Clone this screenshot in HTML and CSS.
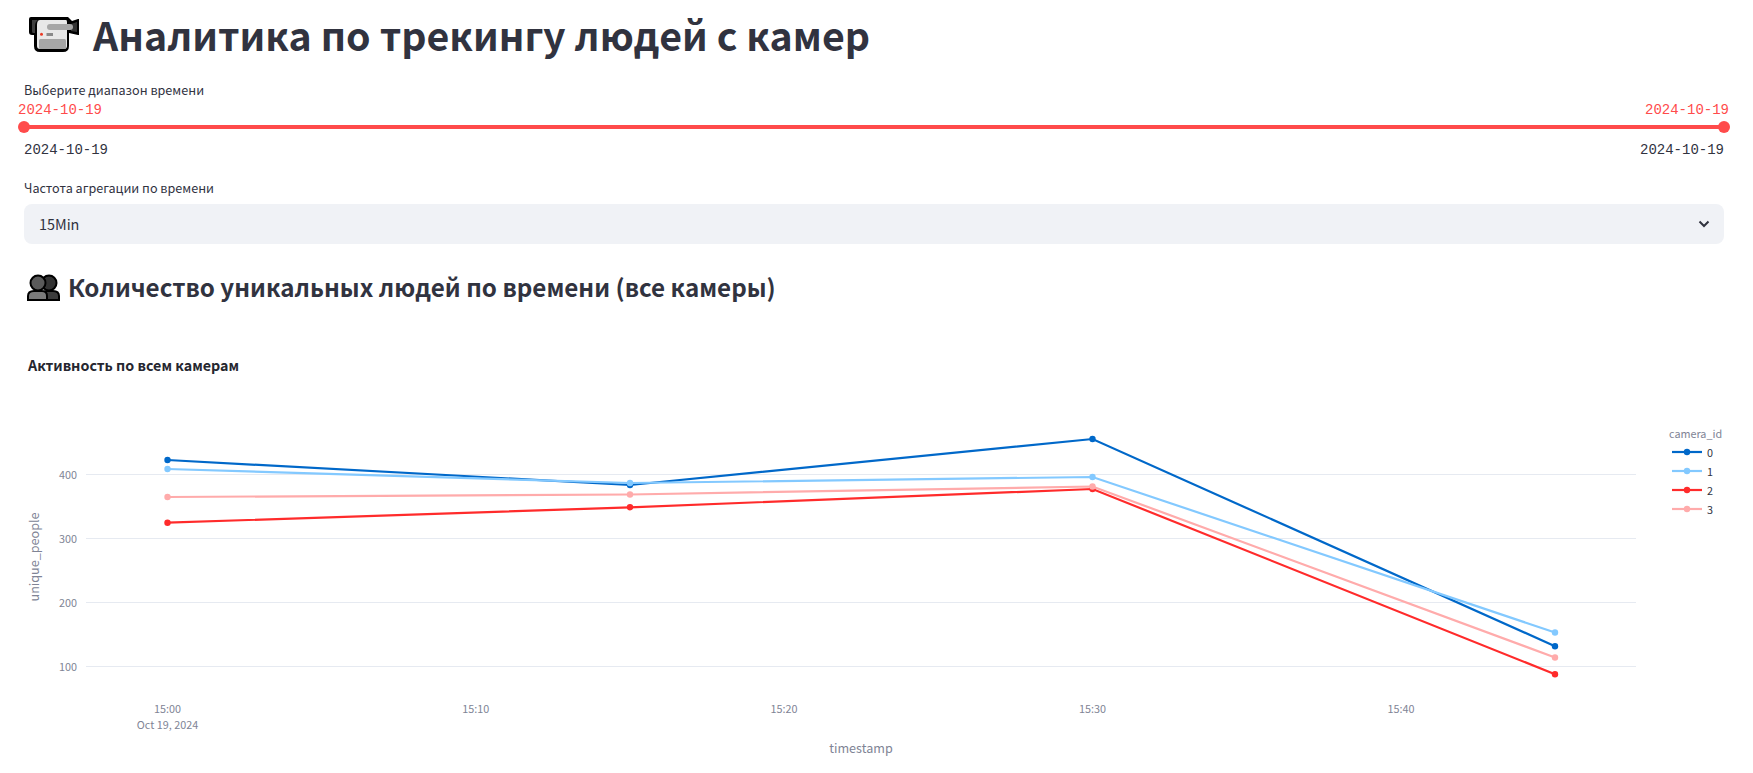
FILE: index.html
```html
<!doctype html>
<html lang="ru">
    <head>
        <meta charset="utf-8">
        <title>Аналитика по трекингу людей с камер</title>
        <link rel="stylesheet" href="styles.css">
    </head>
    <body>
        <main class="page">
            <header class="title-row">
                <svg class="cam-icon" viewBox="28 16 52 37" width="52" height="37">
                    <path d="M29 19Q29 17 31 17H68L72 21L78 19H79V35H78L69 33V46Q69 52 63 52H40Q34 52 34 46V35H32Q29 35 29 32Z" fill="#000"/>
                    <path d="M40 20H66Q67 20 67 22V46Q67 49 64 49H40Q37 49 37 46V25Q37 20 40 20Z" fill="#e8e8e8"/>
                    <path d="M32 20H38Q35 22 35 26V33H33Q32 33 32 31Z" fill="#3d3d3d"/>
                    <path d="M71 24L77 22V32L71 31Z" fill="#333"/>
                    <rect x="47" y="24" width="26" height="6" rx="3" fill="#a6a6a6"/>
                    <circle cx="41.5" cy="34.3" r="1.5" fill="#ea3a24"/>
                    <rect x="46.5" y="33" width="6.5" height="3" fill="#8a8a8a"/>
                    <rect x="39" y="39" width="27" height="10" rx="1.5" fill="#a6a6a6"/>
                </svg>
                <h1>Аналитика по трекингу людей с камер</h1>
            </header>

            <label class="field-label label-slider">Выберите диапазон времени</label>
            <div class="slider">
                <div class="slider-values">
                    <span>2024-10-19</span>
                    <span>2024-10-19</span>
                </div>
                <div class="slider-track">
                    <span class="thumb"></span>
                    <span class="thumb"></span>
                </div>
                <div class="slider-limits">
                    <span>2024-10-19</span>
                    <span>2024-10-19</span>
                </div>
            </div>

            <label class="field-label label-select">Частота агрегации по времени</label>
            <div class="select">
                <span class="select-value">15Min</span>
                <svg class="chevron" viewBox="0 0 12 8" width="12" height="8">
                    <path d="M1.5 1.5L6 6L10.5 1.5" fill="none" stroke="#31333f" stroke-width="2"/>
                </svg>
            </div>

            <div class="subtitle-row">
                <svg class="people-icon" viewBox="0 0 33 28" width="33" height="28">
                    <circle cx="22" cy="9" r="7.5" fill="#333" stroke="#000" stroke-width="2"/>
                    <path d="M14 26V22Q14 17 20 17H26Q32 17 32 22V26Z" fill="#3c3c3c" stroke="#000" stroke-width="2"/>
                    <circle cx="11" cy="9" r="7.5" fill="#5a5a5a" stroke="#000" stroke-width="2"/>
                    <path d="M1 26V22Q1 17 7 17H15Q20 17 20 22V26Z" fill="#7a7a7a" stroke="#000" stroke-width="2"/>
                </svg>
                <h2>Количество уникальных людей по времени (все камеры)</h2>
            </div>

            <!-- viewBox uses page coordinates so points are easy to check against the screen -->
            <svg class="chart" viewBox="24 340 1705 433" width="1705" height="433">
                <text class="chart-title" x="28" y="371">Активность по всем камерам</text>

                <g class="grid">
                    <line x1="86" x2="1636" y1="474.5" y2="474.5"/>
                    <line x1="86" x2="1636" y1="538.5" y2="538.5"/>
                    <line x1="86" x2="1636" y1="602.5" y2="602.5"/>
                    <line x1="86" x2="1636" y1="666.5" y2="666.5"/>
                </g>

                <g class="tick tick-y">
                    <text x="77" y="479">400</text>
                    <text x="77" y="543">300</text>
                    <text x="77" y="607">200</text>
                    <text x="77" y="671">100</text>
                </g>
                <g class="tick tick-x">
                    <text x="167.5" y="713">15:00</text>
                    <text x="167.5" y="729">Oct 19, 2024</text>
                    <text x="475.7" y="713">15:10</text>
                    <text x="784.1" y="713">15:20</text>
                    <text x="1092.5" y="713">15:30</text>
                    <text x="1400.9" y="713">15:40</text>
                </g>
                <text class="axis-title" x="861" y="753" text-anchor="middle">timestamp</text>
                <text class="axis-title" transform="translate(39 557) rotate(-90)" text-anchor="middle">unique_people</text>

                <g class="series s0">
                    <polyline points="167.5,460 630,485 1092.5,439 1555,646.2"/>
                    <circle cx="167.5" cy="460" r="3.2"/><circle cx="630" cy="485" r="3.2"/><circle cx="1092.5" cy="439" r="3.2"/><circle cx="1555" cy="646.2" r="3.2"/>
                </g>
                <g class="series s1">
                    <polyline points="167.5,469 630,483 1092.5,477 1555,632.5"/>
                    <circle cx="167.5" cy="469" r="3.2"/><circle cx="630" cy="483" r="3.2"/><circle cx="1092.5" cy="477" r="3.2"/><circle cx="1555" cy="632.5" r="3.2"/>
                </g>
                <g class="series s2">
                    <polyline points="167.5,522.7 630,507.3 1092.5,489 1555,674.2"/>
                    <circle cx="167.5" cy="522.7" r="3.2"/><circle cx="630" cy="507.3" r="3.2"/><circle cx="1092.5" cy="489" r="3.2"/><circle cx="1555" cy="674.2" r="3.2"/>
                </g>
                <g class="series s3">
                    <polyline points="167.5,497 630,494.5 1092.5,486.5 1555,657.5"/>
                    <circle cx="167.5" cy="497" r="3.2"/><circle cx="630" cy="494.5" r="3.2"/><circle cx="1092.5" cy="486.5" r="3.2"/><circle cx="1555" cy="657.5" r="3.2"/>
                </g>

                <text class="legend-title" x="1669" y="438">camera_id</text>
                <g class="series s0"><line x1="1672" x2="1702" y1="452" y2="452"/><circle cx="1687" cy="452" r="3.2"/></g>
                <g class="series s1"><line x1="1672" x2="1702" y1="471" y2="471"/><circle cx="1687" cy="471" r="3.2"/></g>
                <g class="series s2"><line x1="1672" x2="1702" y1="490" y2="490"/><circle cx="1687" cy="490" r="3.2"/></g>
                <g class="series s3"><line x1="1672" x2="1702" y1="509" y2="509"/><circle cx="1687" cy="509" r="3.2"/></g>
                <g class="legend-label">
                    <text x="1707" y="457">0</text>
                    <text x="1707" y="476">1</text>
                    <text x="1707" y="495">2</text>
                    <text x="1707" y="514">3</text>
                </g>
            </svg>
        </main>
    </body>
</html>
```

FILE: styles.css
```css
html, body{margin:0;height:100%;overflow:hidden;background:#fff;}
body{font-family:"Noto Sans CJK SC","Noto Sans",sans-serif;color:#31333f;}
.page{padding:7px 29px 0 24px;}

.title-row{display:flex;align-items:center;height:56px;}
.cam-icon{margin:-1px 13px 0 4px;flex:none;}
.title-row h1{margin:0 0 2px;font-size:39.3px;line-height:54px;font-weight:700;}

.field-label{display:block;font-size:12.6px;line-height:20px;}
.label-slider{margin-top:17px;}
.label-select{margin-top:20px;}

.slider{font:14px/16px "Liberation Mono",monospace;}
.slider-values{display:flex;justify-content:space-between;margin:2px -5px 0 -6px;color:#ff4b4b;}
.slider-track{display:flex;justify-content:space-between;align-items:center;height:4px;margin:7px 0;background:#ff4b4b;}
.thumb{width:12px;height:12px;margin:0 -6px;border-radius:50%;background:#ff4b4b;flex:none;}
.slider-limits{display:flex;justify-content:space-between;margin-top:13px;}

.select{display:flex;justify-content:space-between;align-items:center;height:40px;margin-top:6px;padding:0 14px 0 15px;border-radius:8px;background:#f0f2f6;font-size:14.4px;}
.select-value{margin-bottom:2px;}

.subtitle-row{display:flex;align-items:center;height:40px;margin-top:23px;}
.people-icon{margin:2px 8px 0 3px;flex:none;}
.subtitle-row h2{margin:0;font-size:24.2px;line-height:40px;font-weight:600;}

.chart{display:block;margin-top:33px;}
.chart text{font-family:"Noto Sans CJK SC","Noto Sans",sans-serif;}
.chart-title{font-size:14.3px;font-weight:700;fill:#262730;}
.grid line{stroke:#e6eaf1;stroke-width:1;}
.tick text{font-size:10.8px;fill:#808495;}
.tick-y text{text-anchor:end;}
.tick-x text{text-anchor:middle;}
.axis-title{font-size:12.6px;fill:#808495;}
.legend-title{font-size:10.8px;fill:#808495;}
.legend-label text{font-size:10.8px;fill:#31333f;}

.series polyline, .series line{fill:none;stroke-width:2.2;}
.s0 polyline, .s0 line{stroke:#0068c9;}
.s0 circle{fill:#0068c9;}
.s1 polyline, .s1 line{stroke:#83c9ff;}
.s1 circle{fill:#83c9ff;}
.s2 polyline, .s2 line{stroke:#ff2b2b;}
.s2 circle{fill:#ff2b2b;}
.s3 polyline, .s3 line{stroke:#ffabab;}
.s3 circle{fill:#ffabab;}
```
